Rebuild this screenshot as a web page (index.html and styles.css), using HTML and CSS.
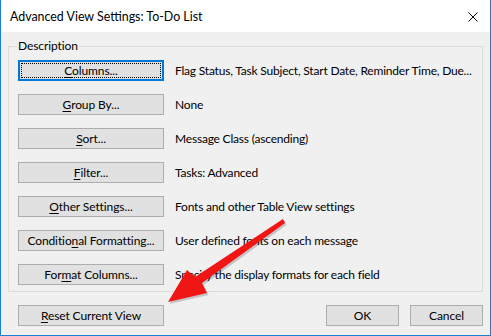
FILE: index.html
```html
<!DOCTYPE html>
<html lang="en">
<head>
  <meta charset="UTF-8">
  <title>Advanced View Settings: To-Do List</title>
  <link rel="stylesheet" href="styles.css">
</head>
<body>
  <div class="dialog">
    <div class="titlebar">
      <span class="title">Advanced View Settings: To-Do List</span>
      <svg class="close" width="10" height="10" viewBox="0 0 10 10">
        <path d="M0.5 0.5 L9.5 9.5 M9.5 0.5 L0.5 9.5" stroke="#000" stroke-width="1" fill="none"/>
      </svg>
    </div>

    <div class="content">
      <fieldset class="group">
        <legend>Description</legend>
        <div class="row">
          <button class="btn focused"><span class="focus-ring"><u>C</u>olumns...</span></button>
          <span class="desc">Flag Status, Task Subject, Start Date, Reminder Time, Due...</span>
        </div>
        <div class="row">
          <button class="btn"><u>G</u>roup By...</button>
          <span class="desc">None</span>
        </div>
        <div class="row">
          <button class="btn"><u>S</u>ort...</button>
          <span class="desc">Message Class (ascending)</span>
        </div>
        <div class="row">
          <button class="btn"><u>F</u>ilter...</button>
          <span class="desc">Tasks: Advanced</span>
        </div>
        <div class="row">
          <button class="btn"><u>O</u>ther Settings...</button>
          <span class="desc">Fonts and other Table View settings</span>
        </div>
        <div class="row">
          <button class="btn">Conditio<u>n</u>al Formatting...</button>
          <span class="desc">User defined fonts on each message</span>
        </div>
        <div class="row">
          <button class="btn">For<u>m</u>at Columns...</button>
          <span class="desc">Specify the display formats for each field</span>
        </div>
      </fieldset>

      <div class="actions">
        <button class="btn"><u>R</u>eset Current View</button>
        <div class="actions-right">
          <button class="btn small">OK</button>
          <button class="btn small">Cancel</button>
        </div>
      </div>
    </div>

    <!-- annotation arrow -->
    <svg class="arrow" width="491" height="336" viewBox="0 0 491 336">
      <polygon points="283,219 285,223 202,283 207,293 168,302 187,270 195,277" fill="rgba(0,0,0,0.18)" transform="translate(1.5,2)"/>
      <polygon points="283,219 285,223 202,283 207,293 168,302 187,270 195,277" fill="#f01616"/>
    </svg>
  </div>
</body>
</html>
```

FILE: styles.css
```css
* {
  box-sizing: border-box;
}
body {
  margin: 0;
  font-family: Lato, 'Noto Sans', 'Liberation Sans', sans-serif;
  font-size: 12px;
  letter-spacing: -0.1px;
  color: #000;
  background: #fff;
}
.dialog {
  position: relative;
  width: 491px;
  height: 336px;
  background: #f0f0f0;
  border: 1px solid #1a7fd4;
  border-top: none;
  display: flex;
  flex-direction: column;
}
.titlebar {
  height: 32px;
  background: #fff;
  display: flex;
  align-items: center;
  justify-content: space-between;
  padding: 0 12px 0 9px;
}
.title {
  font-size: 12.4px;
  letter-spacing: 0;
  margin-top: 1px;
}
.close {
  display: block;
  margin-top: 1px;
}
.content {
  flex: 1;
  padding: 6px 7px 0 7px;
}
.group {
  margin: 0;
  border: 1px solid #dcdcdc;
  padding: 0 8px 6px 9px;
  display: flex;
  flex-direction: column;
  gap: 13px;
}
.group legend {
  padding: 0 1px;
  margin-left: -1px;
  line-height: 16px;
  height: 16px;
  margin-bottom: 6px;
}
.row {
  display: flex;
  align-items: center;
  gap: 11px;
}
.btn {
  font-family: inherit;
  font-size: inherit;
  letter-spacing: inherit;
  color: #000;
  width: 146px;
  height: 21px;
  padding: 0;
  background: #e1e1e1;
  border: 1px solid #adadad;
  border-radius: 0;
  line-height: 18px;
  text-align: center;
}
.btn u {
  text-underline-offset: 2px;
}
.btn.focused {
  border: 2px solid #0078d7;
  padding: 1px;
}
.focus-ring {
  display: block;
  height: 100%;
  line-height: 13px;
  border: 1px dotted #000;
}
.desc {
  white-space: nowrap;
  letter-spacing: -0.2px;
}
.actions {
  display: flex;
  justify-content: space-between;
  align-items: center;
  margin-top: 13px;
  padding-left: 10px;
}
.actions-right {
  display: flex;
  gap: 11px;
}
.btn.small {
  width: 73px;
}
.arrow {
  position: absolute;
  left: -1px;
  top: 0;
  pointer-events: none;
}
```
